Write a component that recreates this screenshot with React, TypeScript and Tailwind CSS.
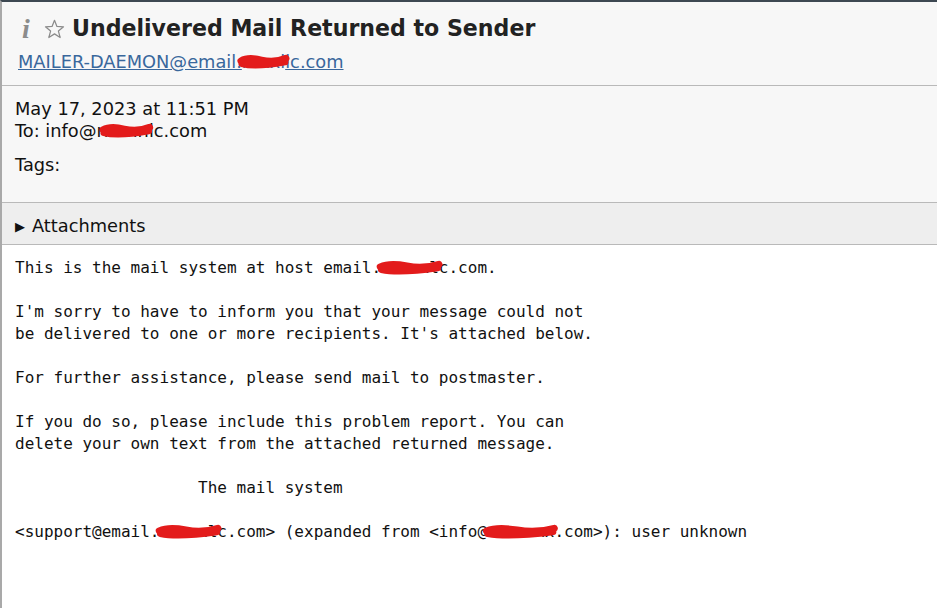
import React from 'react';

const sans = { fontFamily: '"DejaVu Sans", Verdana, sans-serif' };

// red marker scribble laid over redacted text
const Redact: React.FC<{ text: string }> = ({ text }) => (
  <span className="relative inline-block">
    {text}
    <svg
      className="absolute left-[-2px] top-[2px] w-[calc(100%+4px)] h-[80%] overflow-visible"
      viewBox="0 0 100 20"
      preserveAspectRatio="none"
    >
      <path
        d="M2 9 C 15 5, 30 6, 45 8 S 75 11, 97 6 M4 12 C 25 15, 55 14, 95 10"
        stroke="#e31b1b"
        strokeWidth="7"
        strokeLinecap="round"
        fill="none"
        vectorEffect="non-scaling-stroke"
      />
    </svg>
  </span>
);

const Star = () => (
  <svg width="21" height="20" viewBox="0 0 24 23" className="shrink-0">
    <polygon
      points="12,1.5 14.8,8.6 22.4,9 16.5,13.9 18.5,21.3 12,17.1 5.5,21.3 7.5,13.9 1.6,9 9.2,8.6"
      fill="none"
      stroke="#8a8a8a"
      strokeWidth="1.4"
      strokeLinejoin="round"
    />
  </svg>
);

export default function App() {
  return (
    <div
      className="h-[608px] w-[937px] overflow-hidden bg-white border-t-2 border-t-[#3d4852] border-l-2 border-l-[#a9a9a9] text-[#111]"
      style={sans}
    >
      {/* subject + sender */}
      <div className="h-[83px] bg-[#f7f7f7] pl-[18px] pt-[11px]">
        <div className="flex items-center h-[32px]">
          <span
            className="ml-[2px] w-[12px] text-[28px] leading-none font-bold italic text-[#8c8c8c]"
            style={{ fontFamily: '"Liberation Serif", serif' }}
          >
            i
          </span>
          <span className="ml-[10px]">
            <Star />
          </span>
          <h1 className="ml-[7px] text-[22.1px] font-bold text-[#222]">
            Undelivered Mail Returned to Sender
          </h1>
        </div>
        <a className="block mt-[6px] ml-[-2px] text-[17.8px] leading-[22px] text-[#39679c] underline w-fit">
          MAILER-DAEMON@email.<Redact text="rxxxl" />lc.com
        </a>
      </div>

      {/* date / to / tags */}
      <div className="h-[117px] border-t border-[#b9b9b9] bg-[#f7f7f7] pl-[13px] pt-[12px] text-[17.8px] leading-[22px]">
        <div>May 17, 2023 at 11:51 PM</div>
        <div>
          To: info@r<Redact text="nnnn" />lc.com
        </div>
        <div className="mt-[12px]">Tags:</div>
      </div>

      {/* attachments */}
      <div className="h-[43px] border-t border-b border-[#b9b9b9] bg-[#eeeeee] pl-[13px] pt-[12px] text-[17.8px] leading-[22px] flex items-start">
        <span className="text-[13px] mr-[7px] mt-[1px]">▶</span>
        <span>Attachments</span>
      </div>

      {/* message body */}
      <pre
        className="pl-[13px] pt-[12px] text-[16px] leading-[22px] text-[#111]"
        style={{ fontFamily: '"DejaVu Sans Mono", monospace' }}
      >
        {'This is the mail system at host email.'}
        <Redact text="rxxxxl" />
        {'c.com.\n\n'}
        {"I'm sorry to have to inform you that your message could not\n"}
        {"be delivered to one or more recipients. It's attached below.\n\n"}
        {'For further assistance, please send mail to postmaster.\n\n'}
        {'If you do so, please include this problem report. You can\n'}
        {'delete your own text from the attached returned message.\n\n'}
        {'                   The mail system\n\n'}
        {'<support@email.'}
        <Redact text="rxxxxl" />
        {'c.com> (expanded from <info@'}
        <Redact text="rxxxxxx" />
        {'.com>): user unknown'}
      </pre>
    </div>
  );
}
